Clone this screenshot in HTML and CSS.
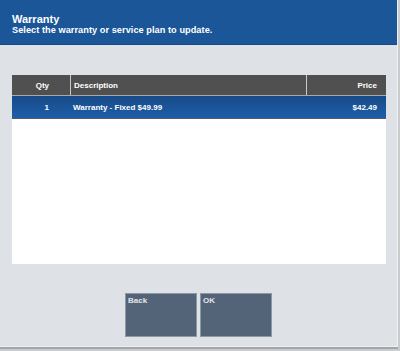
FILE: index.html
```html
<!DOCTYPE html>
<html>
<head>
<meta charset="utf-8">
<link rel="stylesheet" href="styles.css">
</head>
<body>
<div class="frame">
  <div class="app">
    <header class="header">
      <div class="title">Warranty</div>
      <div class="subtitle">Select the warranty or service plan to update.</div>
    </header>
    <main class="content">
      <div class="table">
        <div class="row head">
          <div class="cell qty">Qty</div>
          <div class="cell desc">Description</div>
          <div class="cell price">Price</div>
        </div>
        <div class="row selected">
          <div class="cell qty">1</div>
          <div class="cell desc">Warranty - Fixed $49.99</div>
          <div class="cell price">$42.49</div>
        </div>
      </div>
      <div class="buttons">
        <button class="btn">Back</button>
        <button class="btn">OK</button>
      </div>
    </main>
  </div>
</div>
</body>
</html>
```
FILE: styles.css
```css
html, body {
  margin: 0;
  padding: 0;
}
body {
  width: 400px;
  height: 351px;
  background: #c9cbcf;
  font-family: "Liberation Sans", Arial, sans-serif;
  overflow: hidden;
}
.frame {
  width: 398px;
  height: 349px;
  background: #a3a5a9;
  display: flex;
}
.app {
  width: 397px;
  height: 346px;
  background: #dee1e5;
  border-right: 1px solid #eef0f2;
  border-bottom: 1px solid #eef0f2;
  display: flex;
  flex-direction: column;
}
.header {
  height: 45px;
  background: #1b5699;
  color: #ffffff;
  padding: 13px 0 0 12px;
  box-sizing: border-box;
  border-bottom: 1px solid #174a85;
}
.title {
  font-size: 11px;
  font-weight: bold;
  line-height: 12px;
}
.subtitle {
  font-size: 9.2px;
  font-weight: bold;
  line-height: 11px;
  letter-spacing: 0.05px;
}
.content {
  flex: 1;
  display: flex;
  flex-direction: column;
  padding: 30px 11px 0 12px;
}
.table {
  height: 189px;
  background: #ffffff;
  display: flex;
  flex-direction: column;
}
.row {
  display: flex;
  font-size: 8px;
  font-weight: bold;
  color: #ffffff;
}
.row.head {
  height: 20px;
  background: #505050;
  border-bottom: 1px solid #a9a9a9;
}
.row.selected {
  height: 22px;
  background: linear-gradient(#184a88, #1d5ea8);
  border-bottom: 1px solid #5a5a5a;
}
.cell {
  display: flex;
  align-items: center;
  box-sizing: border-box;
}
.qty {
  width: 58px;
  justify-content: flex-end;
  padding-right: 21px;
}
.desc {
  flex: 1;
  padding-left: 3px;
}
.price {
  width: 79px;
  justify-content: flex-end;
  padding-right: 9px;
}
.row.head .desc {
  border-left: 1px solid #c8c8c8;
  border-right: 1px solid #c8c8c8;
}
.buttons {
  display: flex;
  justify-content: center;
  gap: 3px;
  margin-top: 29px;
  margin-left: -1px;
}
.btn {
  width: 72px;
  height: 44px;
  margin: 0;
  padding: 2px 2px;
  background: #536479;
  border: 1px solid #8d98a5;
  color: #e4e6e9;
  font-family: "Liberation Sans", Arial, sans-serif;
  font-size: 8px;
  font-weight: bold;
  text-align: left;
  display: flex;
  align-items: flex-start;
}
```
